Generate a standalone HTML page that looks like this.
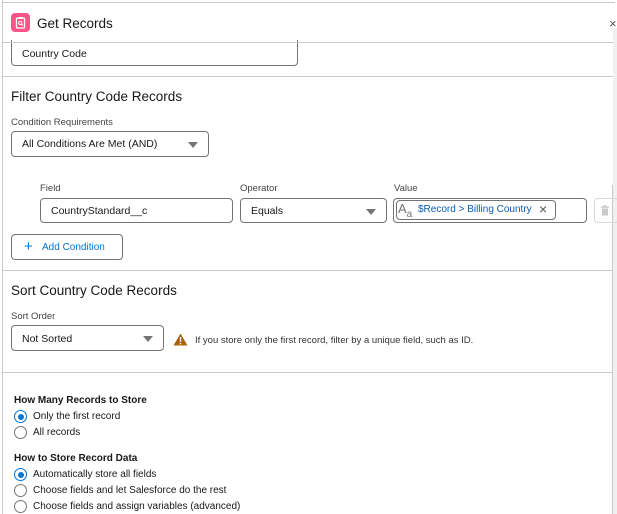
<!DOCTYPE html>
<html><head><meta charset="utf-8"><style>
*{box-sizing:border-box;margin:0;padding:0}
body{width:617px;height:514px;background:#fff;position:relative;overflow:hidden;font-family:"Liberation Sans",sans-serif;color:#181818}
.a{position:absolute}
.hl{position:absolute;left:2px;width:611px;height:1px;background:#c9c9c9}
.box{position:absolute;border:1px solid #747474;border-radius:4px;background:#fff;font-size:10.5px;padding-left:10px;display:flex;align-items:center}
.lbl{position:absolute;font-size:9.5px;color:#444}
.h2{position:absolute;font-size:13.5px;color:#181818}
.caret{position:absolute;right:10px;top:50%;margin-top:-2px;width:0;height:0;border-left:5px solid transparent;border-right:5px solid transparent;border-top:6px solid #747474}
.radio{position:absolute;left:14px;width:13px;height:13px;border:1px solid #747474;border-radius:50%;background:#fff}
.radio.on{border-color:#0176d3}
.radio.on::after{content:"";position:absolute;left:2.5px;top:2.5px;width:6px;height:6px;border-radius:50%;background:#0176d3}
.rt{position:absolute;left:33px;font-size:10px;color:#181818;margin-top:2px}
.b{position:absolute;left:14px;font-size:10px;font-weight:bold;color:#181818;margin-top:2px}
</style></head><body>
<div class="a" style="left:2px;top:0;width:1px;height:514px;background:#c9c9c9"></div>
<div class="a" style="left:2px;top:2px;width:613px;height:1px;background:#c9c9c9"></div>
<div class="a" style="left:613px;top:28px;width:4px;height:486px;background:#f0f0f0"></div>
<div class="a" style="left:612px;top:185px;width:1px;height:329px;background:#c9c9c9"></div>
<div class="a" style="left:11px;top:13px;width:19px;height:19px;border-radius:4px;background:#ff538a"></div>
<svg class="a" style="left:11px;top:13px" width="19" height="19" viewBox="0 0 19 19"><rect x="5.5" y="5" width="8" height="10" rx="1" fill="none" stroke="#fff" stroke-width="1.3"/><rect x="7.5" y="4" width="4" height="2" fill="#fff"/><circle cx="9.3" cy="10" r="1.6" fill="none" stroke="#fff" stroke-width="1"/><line x1="10.5" y1="11.2" x2="11.8" y2="12.5" stroke="#fff" stroke-width="1"/></svg>
<div class="a" style="left:37px;top:16px;font-size:13.5px">Get Records</div>
<div class="a" style="left:609px;top:16px;font-size:13px;color:#555">×</div>
<div class="box" style="left:11px;top:40px;width:287px;height:26px;border-top:none;border-radius:0 0 4px 4px"><span style="margin-top:2px">Country Code</span></div>
<div class="hl" style="top:42px"></div>
<div class="hl" style="top:76px"></div>
<div class="h2" style="left:11px;top:89px">Filter Country Code Records</div>
<div class="lbl" style="left:11px;top:117px">Condition Requirements</div>
<div class="box" style="left:11px;top:131px;width:198px;height:26px">All Conditions Are Met (AND)<span class="caret"></span></div>
<div class="lbl" style="left:40px;top:183px">Field</div>
<div class="box" style="left:40px;top:198px;width:193px;height:25px">CountryStandard__c</div>
<div class="lbl" style="left:240px;top:183px">Operator</div>
<div class="box" style="left:240px;top:198px;width:147px;height:25px">Equals<span class="caret"></span></div>
<div class="lbl" style="left:394px;top:183px">Value</div>
<div class="box" style="left:393px;top:198px;width:194px;height:25px"></div>
<div class="a" style="left:396px;top:200px;width:160px;height:20px;border:1px solid #747474;border-radius:4px"></div>
<div class="a" style="left:398px;top:201px;font-size:13px;color:#747474">A<span style="font-size:10px;position:relative;top:4px">a</span></div>
<div class="a" style="left:418px;top:204px;font-size:10px;color:#0b5cab">$Record &gt; Billing Country</div>
<div class="a" style="left:539px;top:201px;font-size:14px;color:#555">×</div>
<div class="a" style="left:594px;top:198px;width:25px;height:25px;border:1px solid #d8d8d8;border-radius:4px"></div>
<svg class="a" style="left:600px;top:205px" width="10" height="11" viewBox="0 0 10 11"><rect x="1" y="1.5" width="8" height="1.3" fill="#c9c9c9"/><rect x="3.5" y="0.3" width="3" height="1.3" fill="#c9c9c9"/><rect x="2" y="3.5" width="6" height="7" fill="#c9c9c9"/></svg>
<div class="a" style="left:11px;top:234px;width:112px;height:26px;border:1px solid #747474;border-radius:4px"></div>
<div class="a" style="left:24px;top:238px;font-size:15px;color:#0176d3">+</div>
<div class="a" style="left:42px;top:242px;font-size:10px;color:#0176d3">Add Condition</div>
<div class="hl" style="top:270px"></div>
<div class="h2" style="left:11px;top:283px">Sort Country Code Records</div>
<div class="lbl" style="left:11px;top:311px">Sort Order</div>
<div class="box" style="left:11px;top:325px;width:153px;height:26px"><span style="margin-top:2px">Not Sorted</span><span class="caret"></span></div>
<svg class="a" style="left:173px;top:333px" width="15" height="13" viewBox="0 0 15 13"><path d="M7.5 0.5L14.5 12.5H0.5Z" fill="#a96404"/><rect x="6.8" y="4" width="1.4" height="5" fill="#fff"/><rect x="6.8" y="10" width="1.4" height="1.4" fill="#fff"/></svg>
<div class="a" style="left:195px;top:335px;font-size:9.5px;color:#333">If you store only the first record, filter by a unique field, such as ID.</div>
<div class="hl" style="top:372px"></div>
<div class="b" style="top:393px">How Many Records to Store</div>
<div class="radio on" style="top:410px"></div><div class="rt" style="top:409px">Only the first record</div>
<div class="radio" style="top:426px"></div><div class="rt" style="top:425px">All records</div>
<div class="b" style="top:451px">How to Store Record Data</div>
<div class="radio on" style="top:468px"></div><div class="rt" style="top:467px">Automatically store all fields</div>
<div class="radio" style="top:484px"></div><div class="rt" style="top:483px">Choose fields and let Salesforce do the rest</div>
<div class="radio" style="top:500px"></div><div class="rt" style="top:499px">Choose fields and assign variables (advanced)</div>
</body></html>
